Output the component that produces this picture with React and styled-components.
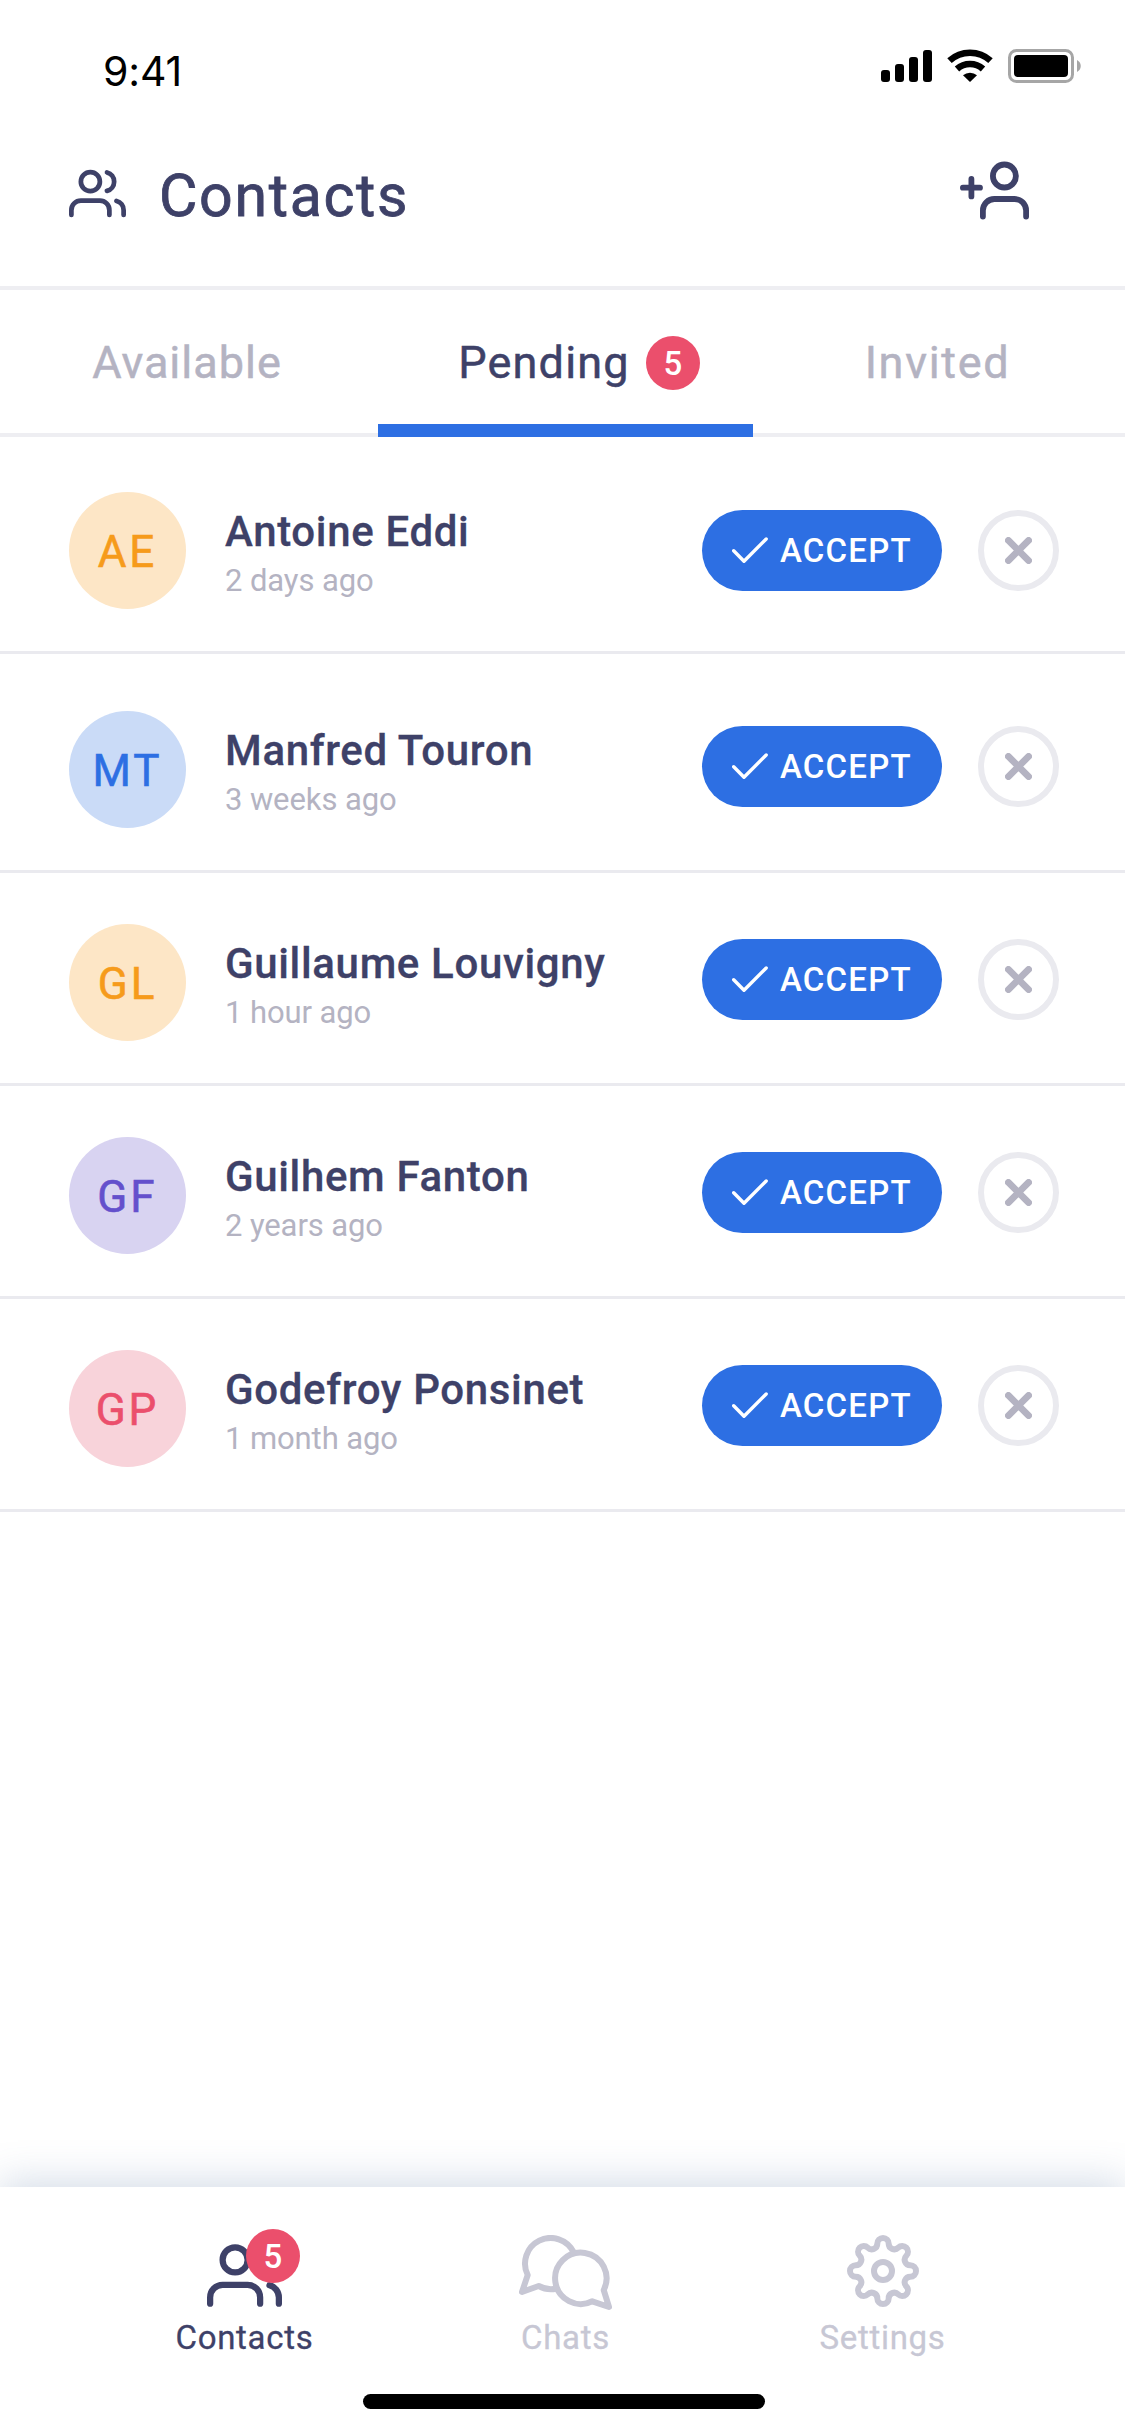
import React from "react";
import styled, { createGlobalStyle } from "styled-components";

const color = {
  ink: "#3e4168",
  muted: "#b4b3c2",
  navMuted: "#c7c7d4",
  line: "#eaeaef",
  softLine: "#eeeef2",
  blue: "#2d6fe3",
  red: "#eb4f6c",
};

const tones = {
  orange: { bg: "#fde6c6", fg: "#f69b1b" },
  blue: { bg: "#cadbf7", fg: "#2d6fe3" },
  purple: { bg: "#d8d3f1", fg: "#6450cc" },
  pink: { bg: "#f8d3da", fg: "#eb4f6c" },
};

const GlobalStyle = createGlobalStyle`
  * { box-sizing: border-box; }
  html, body { margin: 0; background: #fff; }
  body { font-family: Roboto, "Liberation Sans", sans-serif; }
  svg { display: block; flex: none; }
`;

const Screen = styled.div`
  display: flex;
  flex-direction: column;
  width: 1125px;
  height: 2436px;
  overflow: hidden;
  background: #fff;
  color: ${color.ink};
`;

const StatusBar = styled.div`
  display: flex;
  justify-content: space-between;
  align-items: flex-start;
  height: 132px;
  padding: 48px 43px 0 103px;
`;

const Clock = styled.div`
  margin-top: -1px;
  font-family: Inter, sans-serif;
  font-size: 41px;
  line-height: 48px;
  letter-spacing: -0.1px;
  color: #000;
`;

const Header = styled.header`
  display: flex;
  align-items: flex-start;
  height: 154px;
  padding: 29px 96px 0 69px;
`;

const HeaderIcon = styled.div`
  margin-top: 4px;
`;

const Title = styled.h1`
  flex: 1;
  margin: 5px 0 0 33px;
  font-size: 59px;
  line-height: 60px;
  font-weight: 400;
  letter-spacing: 1.7px;
  -webkit-text-stroke: 0.8px currentColor;
`;

const Tabs = styled.nav`
  display: grid;
  grid-template-columns: 378px 375px 372px;
  height: 151px;
  border-top: 4px solid ${color.softLine};
  flex: none;
`;

const Button = styled.button`
  display: flex;
  align-items: center;
  justify-content: center;
  padding: 0;
  border: 0;
  background: none;
  font: inherit;
  color: inherit;
`;

const Tab = styled(Button)`
  align-items: flex-start;
  padding-top: 46px;
  padding-left: ${(p) => p.$indent || 0}px;
  padding-right: ${(p) => p.$outdent || 0}px;
  font-size: 45px;
  line-height: 54px;
  letter-spacing: ${(p) => p.$tracking}px;
  -webkit-text-stroke: 0.5px currentColor;
  color: ${(p) => (p.$active ? color.ink : color.muted)};
  border-bottom: ${(p) => (p.$active ? `13px solid ${color.blue}` : `4px solid ${color.softLine}`)};
`;

const Badge = styled.span`
  display: flex;
  justify-content: center;
  width: 54px;
  height: 54px;
  border-radius: 50%;
  background: ${color.red};
  color: #fff;
  font-size: 33px;
  line-height: 56px;
  font-weight: 500;
  letter-spacing: 0;
  -webkit-text-stroke: 0;
`;

const TabBadge = styled(Badge)`
  margin-left: 16px;
`;

const NavBadge = styled(Badge)`
  position: absolute;
  left: 39px;
  top: -6px;
`;

const List = styled.ul`
  flex: 1;
  margin: 0;
  padding: 0;
  list-style: none;
`;

const Row = styled.li`
  display: flex;
  align-items: flex-start;
  height: ${(p) => p.$height}px;
  padding: ${(p) => p.$height - 162}px 66px 0 69px;
  border-bottom: 3px solid ${color.line};
`;

const Avatar = styled.div`
  width: 117px;
  height: 117px;
  border-radius: 50%;
  background: ${(p) => tones[p.$tone].bg};
  color: ${(p) => tones[p.$tone].fg};
  font-size: 44px;
  line-height: 120px;
  letter-spacing: 3px;
  text-align: center;
  -webkit-text-stroke: 0.6px currentColor;
`;

const Person = styled.div`
  flex: 1;
  padding: 14px 0 0 39px;
`;

const Name = styled.div`
  font-size: 42px;
  line-height: 52px;
  font-weight: 500;
  letter-spacing: 0.65px;
  -webkit-text-stroke: 0.3px currentColor;
`;

const When = styled.div`
  margin-top: 3px;
  font-size: 31px;
  line-height: 40px;
  letter-spacing: -0.1px;
  color: ${color.muted};
`;

const Actions = styled.div`
  display: flex;
  gap: 36px;
  padding-top: ${(p) => p.$drop}px;
`;

const Accept = styled(Button)`
  justify-content: flex-start;
  width: 240px;
  height: 81px;
  padding-left: 30px;
  border-radius: 41px;
  background: ${color.blue};
  color: #fff;
`;

const AcceptLabel = styled.span`
  margin-left: 12px;
  font-size: 33px;
  line-height: 40px;
  font-weight: 500;
  letter-spacing: 1.2px;
`;

const Decline = styled(Button)`
  width: 81px;
  height: 81px;
  border: 6px solid ${color.line};
  border-radius: 50%;
`;

const BottomBar = styled.footer`
  height: 249px;
  padding: 48px 0 0 84px;
  background: #fff;
  box-shadow: 0 -6px 36px rgba(89, 120, 165, 0.25);
`;

const NavItems = styled.div`
  display: grid;
  grid-template-columns: 321px 321px 313px;
`;

const NavItem = styled.div`
  display: flex;
  flex-direction: column;
  align-items: center;
  color: ${(p) => (p.$active ? color.ink : color.navMuted)};
`;

const NavIcon = styled.div`
  position: relative;
  height: 75px;
  padding-top: ${(p) => p.$drop || 0}px;
`;

const NavLabel = styled.span`
  margin-top: 8px;
  font-size: 33px;
  line-height: 40px;
  letter-spacing: 0.7px;
  -webkit-text-stroke: 0.3px currentColor;
`;

const HomeIndicator = styled.div`
  width: 402px;
  height: 15px;
  margin: 36px 0 0 279px;
  border-radius: 8px;
  background: #000;
`;

const StatusIcons = () => (
  <svg width="202" height="36" viewBox="880 48 202 36">
    <rect x="881" y="70" width="9" height="12" rx="3" />
    <rect x="895" y="64" width="9" height="18" rx="3" />
    <rect x="909" y="57" width="9" height="25" rx="3" />
    <rect x="923" y="50" width="9" height="32" rx="3" />
    <g fill="none" stroke="#000" strokeWidth="6.6">
      <path d="M949.5 60.6a30.5 30.5 0 0 1 41 0" />
      <path d="M957 69a19.5 19.5 0 0 1 26 0" />
    </g>
    <path d="M963 75.2a11 11 0 0 1 14 0L970 82z" />
    <rect x="1009.5" y="50.5" width="63" height="31" rx="7" fill="none" stroke="#a6a6a6" strokeWidth="3" />
    <rect x="1014" y="55" width="54" height="22" rx="4" />
    <path d="M1077 60c5 2.5 5 9.5 0 12z" fill="#a6a6a6" />
  </svg>
);

const UsersIcon = ({ size }) => (
  <svg width={size} height={size} viewBox="0 0 24 24" fill="none" stroke="currentColor" strokeWidth="2" strokeLinecap="round" strokeLinejoin="round">
    <path d="M17 21v-2a4 4 0 0 0-4-4H5a4 4 0 0 0-4 4v2" />
    <circle cx="9" cy="7" r="4" />
    <path d="M23 21v-2a4 4 0 0 0-3-3.87" />
    <path d="M16 3.13a4 4 0 0 1 0 7.75" />
  </svg>
);

const AddUserIcon = () => (
  <svg width="69" height="59" viewBox="960 161 69 59" fill="none" stroke="currentColor" strokeWidth="5.8" strokeLinecap="round">
    <circle cx="1004.4" cy="176" r="11.5" />
    <path d="M982.9 216.5V210.5A11.5 11.5 0 0 1 994.4 199H1014.6A11.5 11.5 0 0 1 1026.1 210.5V216.5" />
    <path d="M962.9 187.7H980M971.4 179V196.4" />
  </svg>
);

const CheckIcon = () => (
  <svg width="36" height="27" viewBox="0 0 36 27" fill="none" stroke="currentColor" strokeWidth="3.4" strokeLinecap="round" strokeLinejoin="round">
    <path d="M1.7 13.8L12 24.2L34.2 2" />
  </svg>
);

const CrossIcon = () => (
  <svg width="27" height="27" viewBox="0 0 27 27" fill="none" stroke={color.muted} strokeWidth="6.8" strokeLinecap="round">
    <path d="M3.4 3.4L23.6 23.6M23.6 3.4L3.4 23.6" />
  </svg>
);

const ChatsIcon = () => (
  <svg width="93" height="75" viewBox="0 0 93 75" fill="none" stroke="currentColor" strokeWidth="6" strokeLinecap="round" strokeLinejoin="round">
    <path d="M73.3 66.3A25.7 25.7 0 1 1 84.7 55L90 72Z" />
    <path d="M54.6 17.2A25.6 25.6 0 0 0 8.7 40L3 57L19.7 51A25.6 25.6 0 0 0 37 53.7" />
  </svg>
);

/* Eight rounded teeth joined by rounded valleys, built by turning one tooth. */
const gearPath = (() => {
  const turn = (x, y, a) => [
    (x * Math.cos(a) - y * Math.sin(a)).toFixed(2),
    (x * Math.sin(a) + y * Math.cos(a)).toFixed(2),
  ];
  let d = `M${turn(-5.7, -27.3, 0)}`;
  for (let i = 0; i < 8; i += 1) {
    const a = (i * Math.PI) / 4;
    d += `A5.7 5.7 0 0 1 ${turn(5.7, -27.3, a)}`;
    d += `A5.6 5.6 0 0 0 ${turn(-5.7, -27.3, a + Math.PI / 4)}`;
  }
  return `${d}Z`;
})();

const GearIcon = () => (
  <svg width="72" height="72" viewBox="-36 -36 72 72" fill="none" stroke="currentColor" strokeWidth="6" strokeLinejoin="round">
    <path d={gearPath} />
    <circle r="9" />
  </svg>
);

const requests = [
  { initials: "AE", tone: "orange", name: "Antoine Eddi", when: "2 days ago", height: 217, drop: 18 },
  { initials: "MT", tone: "blue", name: "Manfred Touron", when: "3 weeks ago", height: 219, drop: 15 },
  { initials: "GL", tone: "orange", name: "Guillaume Louvigny", when: "1 hour ago", height: 213, drop: 15 },
  { initials: "GF", tone: "purple", name: "Guilhem Fanton", when: "2 years ago", height: 213, drop: 15 },
  { initials: "GP", tone: "pink", name: "Godefroy Ponsinet", when: "1 month ago", height: 213, drop: 15 },
];

export default function App() {
  return (
    <Screen>
      <GlobalStyle />
      <StatusBar>
        <Clock>9:41</Clock>
        <StatusIcons />
      </StatusBar>
      <Header>
        <HeaderIcon>
          <UsersIcon size={57} />
        </HeaderIcon>
        <Title>Contacts</Title>
        <AddUserIcon />
      </Header>
      <Tabs>
        <Tab $outdent={4} $tracking={1}>Available</Tab>
        <Tab $active $indent={27} $tracking={1.2}>
          Pending
          <TabBadge>5</TabBadge>
        </Tab>
        <Tab $outdent={3} $tracking={1.7}>Invited</Tab>
      </Tabs>
      <List>
        {requests.map((r) => (
          <Row key={r.initials} $height={r.height}>
            <Avatar $tone={r.tone}>{r.initials}</Avatar>
            <Person>
              <Name>{r.name}</Name>
              <When>{r.when}</When>
            </Person>
            <Actions $drop={r.drop}>
              <Accept>
                <CheckIcon />
                <AcceptLabel>ACCEPT</AcceptLabel>
              </Accept>
              <Decline>
                <CrossIcon />
              </Decline>
            </Actions>
          </Row>
        ))}
      </List>
      <BottomBar>
        <NavItems>
          <NavItem $active>
            <NavIcon $drop={3}>
              <UsersIcon size={75} />
              <NavBadge>5</NavBadge>
            </NavIcon>
            <NavLabel>Contacts</NavLabel>
          </NavItem>
          <NavItem>
            <NavIcon>
              <ChatsIcon />
            </NavIcon>
            <NavLabel>Chats</NavLabel>
          </NavItem>
          <NavItem>
            <NavIcon>
              <GearIcon />
            </NavIcon>
            <NavLabel>Settings</NavLabel>
          </NavItem>
        </NavItems>
        <HomeIndicator />
      </BottomBar>
    </Screen>
  );
}
